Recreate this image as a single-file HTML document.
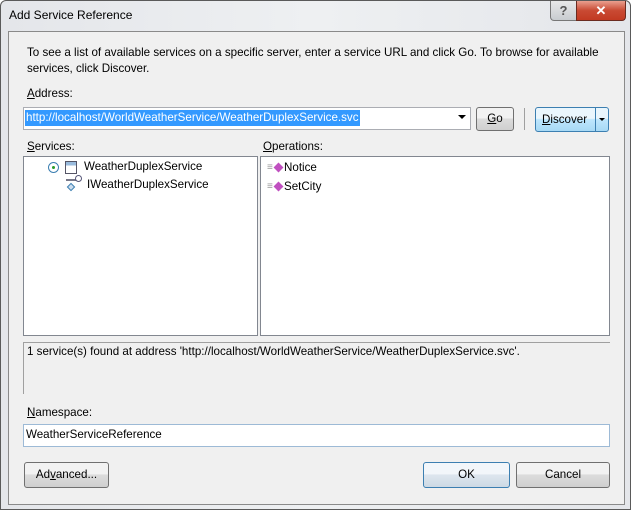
<!DOCTYPE html>
<html><head><meta charset="utf-8"><style>
*{box-sizing:border-box}
body{margin:0;width:631px;height:510px;overflow:hidden;font-family:"Liberation Sans",sans-serif;font-size:11.6px;color:#000;background:#fff}
.win{position:absolute;left:0;top:0;width:631px;height:510px;border:1px solid #5a5a5a;border-radius:6px 6px 0 0;background:linear-gradient(90deg,#e4e6ea,#eef0f2 50%,#e4e6ea)}
.title{position:absolute;left:8px;top:7px;font-size:12px}
.help{position:absolute;left:549px;top:0;width:27px;height:20px;border:1px solid #777;border-top:none;border-radius:0 0 0 4px;background:linear-gradient(#e8e8e8,#c8ccd0);text-align:center;color:#555;font-weight:bold;font-size:13px;line-height:19px}
.close{position:absolute;left:575px;top:0;width:50px;height:20px;border:1px solid #6a2b20;border-top:none;border-radius:0 0 4px 0;background:linear-gradient(#e9a08f,#c94a33 50%,#c23a22);text-align:center;color:#fff;font-weight:bold;font-size:13px;line-height:19px}
.client{position:absolute;left:7px;top:30px;width:617px;height:474px;border:1px solid #8a8a8a;background:#f0f0f0}
.a{position:absolute;white-space:nowrap}
u{text-decoration:underline}
.box{position:absolute;background:#fff;border:1px solid #a0a0a0}
.btn{position:absolute;border:1px solid #707070;border-radius:3px;background:linear-gradient(#f2f2f2 45%,#dcdcdc 50%,#cfcfcf);text-align:center;line-height:21px}
</style></head><body>
<div class="win">
<div class="title">Add Service Reference</div>
<div class="help">?</div>
<div class="close">✕</div>
<div class="client"></div>
<div class="a" style="left:26px;top:44px;line-height:16px">To see a list of available services on a specific server, enter a service URL and click Go. To browse for available<br>services, click Discover.</div>
<div class="a" style="left:26px;top:86px"><u>A</u>ddress:</div>
<div class="box" style="left:22px;top:106px;width:448px;height:23px;border-color:#abadb3"></div>
<div class="a" style="left:24px;top:109px;background:#3399ff;color:#fff;padding:0 1px;line-height:16px">http://localhost/WorldWeatherService/WeatherDuplexService.svc</div>
<div class="a" style="left:457px;top:114px;width:0;height:0;border-left:4px solid transparent;border-right:4px solid transparent;border-top:4px solid #000"></div>
<div class="btn" style="left:475px;top:106px;width:38px;height:24px"><u>G</u>o</div>
<div class="a" style="left:523px;top:107px;width:1px;height:22px;background:#a0a0a0"></div>
<div class="btn" style="left:534px;top:106px;width:74px;height:25px;border-color:#3c7fb1;background:linear-gradient(#eaf6fd 45%,#bee6fd 50%,#a7d9f5);text-align:left;padding-left:6px;line-height:23px"><u>D</u>iscover<span style="position:absolute;left:59px;top:0;width:1px;height:23px;background:#3c7fb1"></span><span style="position:absolute;left:63px;top:10px;border-left:3px solid transparent;border-right:3px solid transparent;border-top:3px solid #000"></span></div>
<div class="a" style="left:26px;top:139px"><u>S</u>ervices:</div>
<div class="a" style="left:262px;top:139px"><u>O</u>perations:</div>
<div class="box" style="left:22px;top:155px;width:235px;height:180px;border-color:#828790"></div>
<div class="box" style="left:259px;top:155px;width:350px;height:180px;border-color:#828790"></div>
<div class="a" style="left:47px;top:161px;width:11px;height:11px;border:1px solid #3c7fb1;border-radius:50%;background:#fff"><span style="position:absolute;left:3px;top:3px;width:3px;height:3px;background:#2a9c2a;border-radius:50%"></span></div>
<div class="a" style="left:64px;top:160px;width:12px;height:13px;border:1px solid #556;background:linear-gradient(#9bd 30%,#fff 30%)"></div>
<div class="a" style="left:83px;top:159px">WeatherDuplexService</div>
<div class="a" style="left:65px;top:178px;width:12px;height:2px;background:#778;"></div>
<div class="a" style="left:74px;top:174px;width:7px;height:7px;border:1px solid #557;border-radius:50%;background:#fff"></div>
<div class="a" style="left:67px;top:183px;width:6px;height:6px;border:1px solid #3c7fb1;background:#cde;transform:rotate(45deg)"></div>
<div class="a" style="left:86px;top:177px">IWeatherDuplexService</div>
<div class="a" style="left:266px;top:161px;color:#999;font-size:10px">≡</div>
<div class="a" style="left:274px;top:163px;width:7px;height:7px;background:#c050c0;transform:rotate(45deg)"></div>
<div class="a" style="left:283px;top:160px">Notice</div>
<div class="a" style="left:266px;top:180px;color:#999;font-size:10px">≡</div>
<div class="a" style="left:274px;top:182px;width:7px;height:7px;background:#c050c0;transform:rotate(45deg)"></div>
<div class="a" style="left:283px;top:179px">SetCity</div>
<div class="a" style="left:22px;top:341px;width:587px;height:52px;border-top:1px solid #a0a0a0;border-left:1px solid #a0a0a0;background:#f0f0f0"></div>
<div class="a" style="left:26px;top:344px">1 service(s) found at address 'http://localhost/WorldWeatherService/WeatherDuplexService.svc'.</div>
<div class="a" style="left:26px;top:405px"><u>N</u>amespace:</div>
<div class="box" style="left:22px;top:423px;width:587px;height:23px;border-color:#9dbad6"></div>
<div class="a" style="left:25px;top:427px">WeatherServiceReference</div>
<div class="btn" style="left:23px;top:461px;width:85px;height:26px;line-height:24px">Ad<u>v</u>anced...</div>
<div class="btn" style="left:422px;top:461px;width:87px;height:26px;line-height:24px;border-color:#3c7fb1;background:linear-gradient(#f2f6fa 45%,#dde6ee 50%,#cdd9e4)">OK</div>
<div class="btn" style="left:515px;top:461px;width:94px;height:26px;line-height:24px">Cancel</div>
</div>
</body></html>
